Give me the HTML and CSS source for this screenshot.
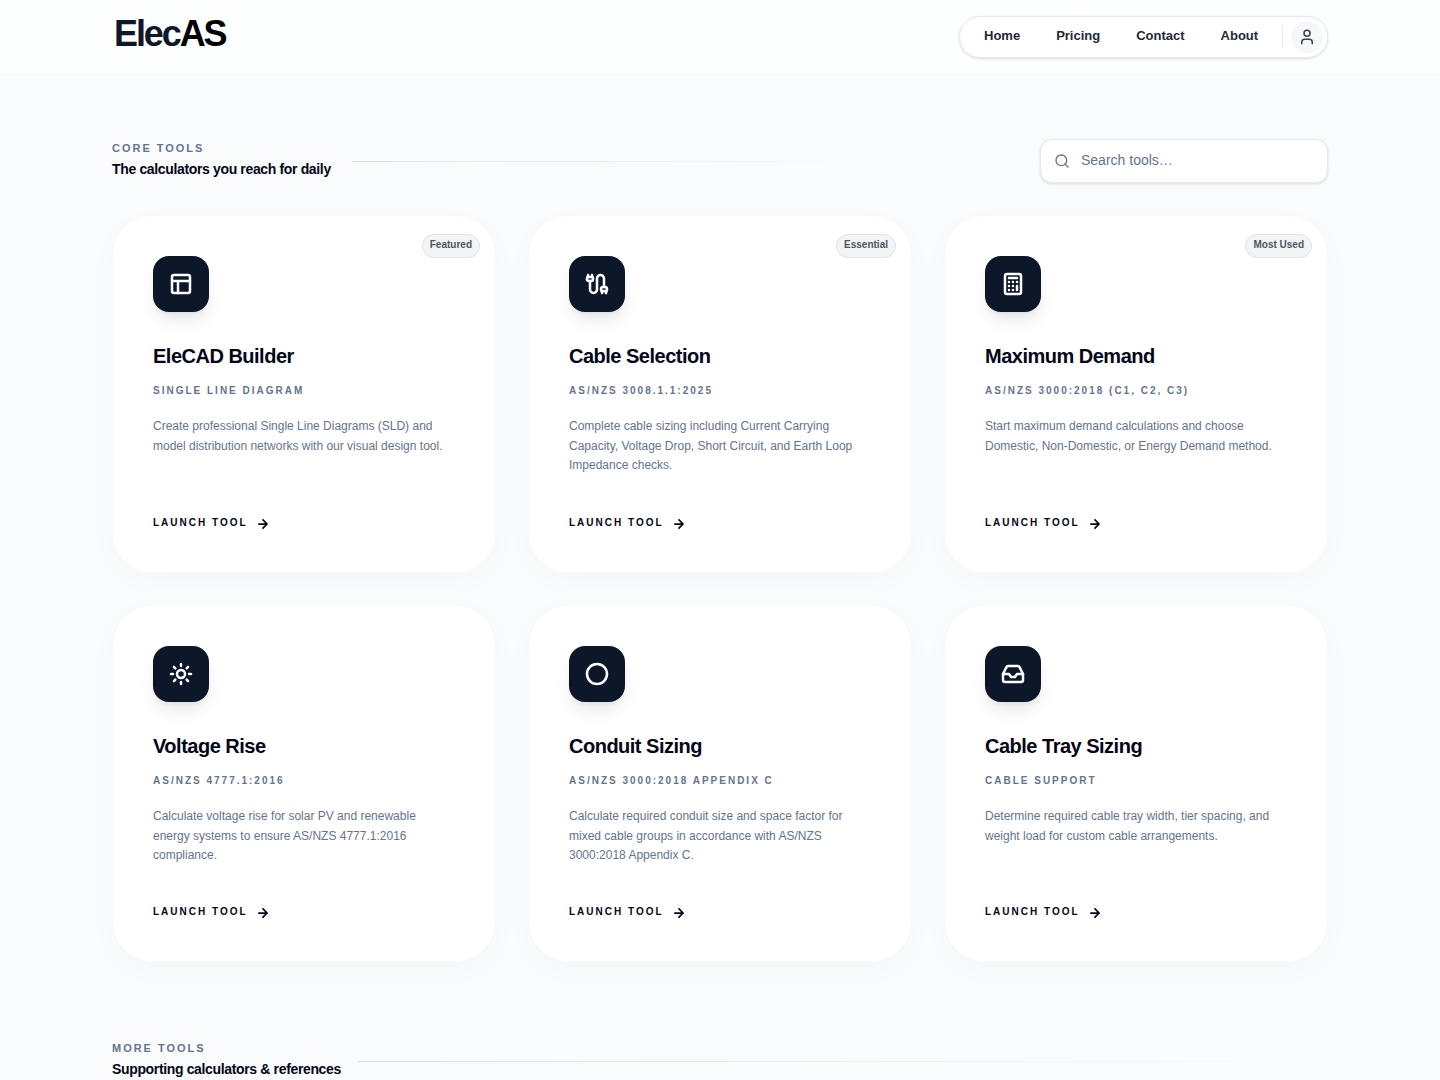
FILE: index.html
```
<!DOCTYPE html>
<html lang="en">
<head>
  <meta charset="UTF-8">
  <meta name="viewport" content="width=device-width, initial-scale=1.0">
  <title>ElecAS</title>
  <link rel="stylesheet" href="styles.css">
</head>
<body>
  <header class="site-header">
    <div class="container header-inner">
      <a class="logo" href="#">Elec<span>AS</span></a>
      <nav class="nav">
        <a class="nav-home" href="#">Home</a>
        <a class="nav-pricing" href="#">Pricing</a>
        <a class="nav-contact" href="#">Contact</a>
        <a class="nav-about" href="#">About</a>
        <span class="nav-divider"></span>
        <button class="user-btn" aria-label="Account">
          <svg class="icon" viewBox="0 0 24 24"><circle cx="12" cy="7" r="4"/><path d="M19 21v-2a4 4 0 0 0-4-4H9a4 4 0 0 0-4 4v2"/></svg>
        </button>
      </nav>
    </div>
  </header>

  <main class="container">
    <section class="section-head">
      <div class="section-text">
        <p class="eyebrow">Core Tools</p>
        <h2>The calculators you reach for daily</h2>
      </div>
      <div class="rule rule-core"></div>
      <label class="search">
        <svg class="icon" viewBox="0 0 24 24"><circle cx="11" cy="11" r="8"/><path d="m21 21-4.3-4.3"/></svg>
        <input type="text" placeholder="Search tools…">
      </label>
    </section>

    <div class="grid">
      <article class="card">
        <span class="badge">Featured</span>
        <div class="tile"><svg class="icon" viewBox="0 0 24 24"><rect x="3" y="3" width="18" height="18" rx="2"/><path d="M3 9h18M9 21V9"/></svg></div>
        <h3>EleCAD Builder</h3>
        <p class="standard">Single Line Diagram</p>
        <p class="desc">Create professional Single Line Diagrams (SLD) and<br>model distribution networks with our visual design tool.</p>
        <a class="launch" href="#"><span>Launch Tool</span> <svg class="icon" viewBox="0 0 24 24"><path d="M5 12h14M12 5l7 7-7 7"/></svg></a>
      </article>

      <article class="card">
        <span class="badge">Essential</span>
        <div class="tile"><svg class="icon" viewBox="0 0 24 24"><path d="M17 21v-2a1 1 0 0 1-1-1v-1a2 2 0 0 1 2-2h2a2 2 0 0 1 2 2v1a1 1 0 0 1-1 1v2"/><path d="M19 15V6.5a1 1 0 0 0-7 0v11a1 1 0 0 1-7 0V9"/><path d="M21 21v-2h-4"/><path d="M3 5h4V3"/><path d="M7 5a1 1 0 0 1 1 1v1a2 2 0 0 1-2 2H4a2 2 0 0 1-2-2V6a1 1 0 0 1 1-1V3"/></svg></div>
        <h3>Cable Selection</h3>
        <p class="standard">AS/NZS 3008.1.1:2025</p>
        <p class="desc">Complete cable sizing including Current Carrying<br>Capacity, Voltage Drop, Short Circuit, and Earth Loop<br>Impedance checks.</p>
        <a class="launch" href="#"><span>Launch Tool</span> <svg class="icon" viewBox="0 0 24 24"><path d="M5 12h14M12 5l7 7-7 7"/></svg></a>
      </article>

      <article class="card">
        <span class="badge">Most Used</span>
        <div class="tile"><svg class="icon" viewBox="0 0 24 24"><rect x="4" y="2" width="16" height="20" rx="2"/><path d="M8 6h8M16 14v4M16 10h.01M12 10h.01M8 10h.01M12 14h.01M8 14h.01M12 18h.01M8 18h.01"/></svg></div>
        <h3>Maximum Demand</h3>
        <p class="standard">AS/NZS 3000:2018 (C1, C2, C3)</p>
        <p class="desc">Start maximum demand calculations and choose<br>Domestic, Non-Domestic, or Energy Demand method.</p>
        <a class="launch" href="#"><span>Launch Tool</span> <svg class="icon" viewBox="0 0 24 24"><path d="M5 12h14M12 5l7 7-7 7"/></svg></a>
      </article>

      <article class="card">
        <div class="tile"><svg class="icon" viewBox="0 0 24 24"><circle cx="12" cy="12" r="4"/><path d="M12 2v2M12 20v2M4.93 4.93l1.41 1.41M17.66 17.66l1.41 1.41M2 12h2M20 12h2M6.34 17.66l-1.41 1.41M19.07 4.93l-1.41 1.41"/></svg></div>
        <h3>Voltage Rise</h3>
        <p class="standard">AS/NZS 4777.1:2016</p>
        <p class="desc">Calculate voltage rise for solar PV and renewable<br>energy systems to ensure AS/NZS 4777.1:2016<br>compliance.</p>
        <a class="launch" href="#"><span>Launch Tool</span> <svg class="icon" viewBox="0 0 24 24"><path d="M5 12h14M12 5l7 7-7 7"/></svg></a>
      </article>

      <article class="card">
        <div class="tile"><svg class="icon" viewBox="0 0 24 24"><circle cx="12" cy="12" r="10"/></svg></div>
        <h3>Conduit Sizing</h3>
        <p class="standard">AS/NZS 3000:2018 Appendix C</p>
        <p class="desc">Calculate required conduit size and space factor for<br>mixed cable groups in accordance with AS/NZS<br>3000:2018 Appendix C.</p>
        <a class="launch" href="#"><span>Launch Tool</span> <svg class="icon" viewBox="0 0 24 24"><path d="M5 12h14M12 5l7 7-7 7"/></svg></a>
      </article>

      <article class="card">
        <div class="tile"><svg class="icon" viewBox="0 0 24 24"><path d="M22 12h-6l-2 3h-4l-2-3H2"/><path d="M5.45 5.11 2 12v6a2 2 0 0 0 2 2h16a2 2 0 0 0 2-2v-6l-3.45-6.89A2 2 0 0 0 16.76 4H7.24a2 2 0 0 0-1.79 1.11z"/></svg></div>
        <h3>Cable Tray Sizing</h3>
        <p class="standard">Cable Support</p>
        <p class="desc">Determine required cable tray width, tier spacing, and<br>weight load for custom cable arrangements.</p>
        <a class="launch" href="#"><span>Launch Tool</span> <svg class="icon" viewBox="0 0 24 24"><path d="M5 12h14M12 5l7 7-7 7"/></svg></a>
      </article>
    </div>

    <section class="section-head section-more">
      <div class="section-text">
        <p class="eyebrow">More Tools</p>
        <h2>Supporting calculators &amp; references</h2>
      </div>
      <div class="rule"></div>
    </section>
  </main>
</body>
</html>
```

FILE: styles.css
```
* {
  box-sizing: border-box;
}
body {
  margin: 0;
  height: 1080px;
  overflow: hidden;
  background: #fafbfd;
  color: #020617;
  font-family: "Liberation Sans", Helvetica, Arial, sans-serif;
}
a {
  color: inherit;
  text-decoration: none;
}
h2, h3, p {
  margin: 0;
}
.icon {
  fill: none;
  stroke: currentColor;
  stroke-width: 2;
  stroke-linecap: round;
  stroke-linejoin: round;
  flex-shrink: 0;
}
.container {
  width: 1216px;
  margin: 0 auto;
}

/* header */
.site-header {
  height: 75px;
  background: #fdfefe;
  border-bottom: 1px solid #f3f5f8;
}
.header-inner {
  display: flex;
  justify-content: space-between;
}
.logo {
  padding: 13px 0 0 2px;
  font-size: 36px;
  line-height: 42px;
  font-weight: bold;
  letter-spacing: -2.1px;
  color: #0f172a;
}
.logo span {
  color: #000;
}
.nav {
  display: flex;
  align-items: center;
  width: 369px;
  height: 42px;
  margin-top: 16px;
  padding: 0 4px 0 24px;
  background: #fff;
  border: 1px solid #e6e9ee;
  border-radius: 21px;
  box-shadow: 0 1px 3px rgba(0, 0, 0, 0.12);
  font-size: 13px;
  font-weight: bold;
  color: #1f2937;
}
.nav a {
  margin-right: 36px;
  padding-bottom: 3px;
}
.nav .nav-about {
  margin-right: 24px;
}
.nav-divider {
  width: 1px;
  height: 24px;
  margin-right: 8px;
  background: #e8ebef;
}
.user-btn {
  display: flex;
  align-items: center;
  justify-content: center;
  width: 32px;
  height: 32px;
  padding: 0;
  border: none;
  border-radius: 50%;
  background: #f5f7f9;
  color: #334155;
}
.user-btn .icon {
  width: 18px;
  height: 18px;
}

/* section headings */
.section-head {
  display: flex;
  align-items: center;
  height: 46px;
  margin-top: 63px;
}
.section-text {
  padding-bottom: 3px;
  white-space: nowrap;
}
.eyebrow {
  font-size: 11px;
  line-height: 16px;
  font-weight: bold;
  letter-spacing: 1.98px;
  text-transform: uppercase;
  color: #64748b;
}
.section-head h2 {
  margin-top: 2px;
  font-size: 14px;
  line-height: 22px;
  letter-spacing: -0.35px;
}
.rule {
  flex: 1;
  height: 1px;
  margin-left: 17px;
  background: linear-gradient(to right, #dde3ec, transparent);
}
.rule-core {
  flex: 0 0 525px;
  margin-left: 21px;
}
.search {
  display: flex;
  align-items: center;
  width: 288px;
  height: 44px;
  margin-left: auto;
  padding: 0 13px;
  background: #fff;
  border: 1px solid #e2e8f0;
  border-radius: 12px;
  box-shadow: 0 1px 3px rgba(0, 0, 0, 0.12);
  color: #64748b;
}
.search .icon {
  width: 16px;
  height: 16px;
}
.search input {
  width: 200px;
  margin-left: 11px;
  padding: 0 0 3px;
  border: none;
  outline: none;
  font: 14px "Liberation Sans", Helvetica, Arial, sans-serif;
}
.search input::placeholder {
  color: #64748b;
}

/* tool cards */
.grid {
  display: grid;
  grid-template-columns: repeat(3, 384px);
  grid-template-rows: 358px 357px;
  gap: 32px;
  margin-top: 31px;
}
.card {
  position: relative;
  display: flex;
  flex-direction: column;
  align-items: flex-start;
  padding: 40px 40px 39px;
  background: #fff;
  border: 1px solid #f7f9fa;
  border-radius: 40px;
  box-shadow: 0 8px 30px rgba(0, 0, 0, 0.025);
}
.badge {
  position: absolute;
  top: 18px;
  right: 15px;
  height: 24px;
  padding: 0 7px;
  border: 1px solid #dfe2e5;
  border-radius: 12px;
  background: #f3f4f5;
  font-size: 10px;
  line-height: 19px;
  font-weight: bold;
  color: #4b5563;
}
.tile {
  display: flex;
  align-items: center;
  justify-content: center;
  width: 56px;
  height: 56px;
  border-radius: 16px;
  background: #0d172a;
  color: #fff;
  box-shadow: 0 10px 18px -3px rgba(15, 23, 42, 0.1), 0 4px 6px -4px rgba(15, 23, 42, 0.1);
}
.tile .icon {
  width: 24px;
  height: 24px;
  stroke-width: 2.5;
}
.card h3 {
  margin-top: 30px;
  font-size: 20px;
  line-height: 28px;
  letter-spacing: -0.5px;
}
.standard {
  margin-top: 13px;
  font-size: 10px;
  line-height: 15px;
  font-weight: bold;
  letter-spacing: 2px;
  text-transform: uppercase;
  color: #64748b;
}
.desc {
  margin-top: 19px;
  font-size: 12px;
  line-height: 19.5px;
  white-space: nowrap;
  color: #64748b;
}
.launch {
  display: flex;
  align-items: center;
  margin-top: auto;
  font-size: 10px;
  line-height: 16px;
  font-weight: bold;
  letter-spacing: 2px;
  text-transform: uppercase;
}
.launch span {
  padding-bottom: 2px;
}
.launch .icon {
  width: 14px;
  height: 14px;
  margin-left: 8px;
  stroke-width: 3;
}

.section-more {
  margin-top: 76px;
}
```
